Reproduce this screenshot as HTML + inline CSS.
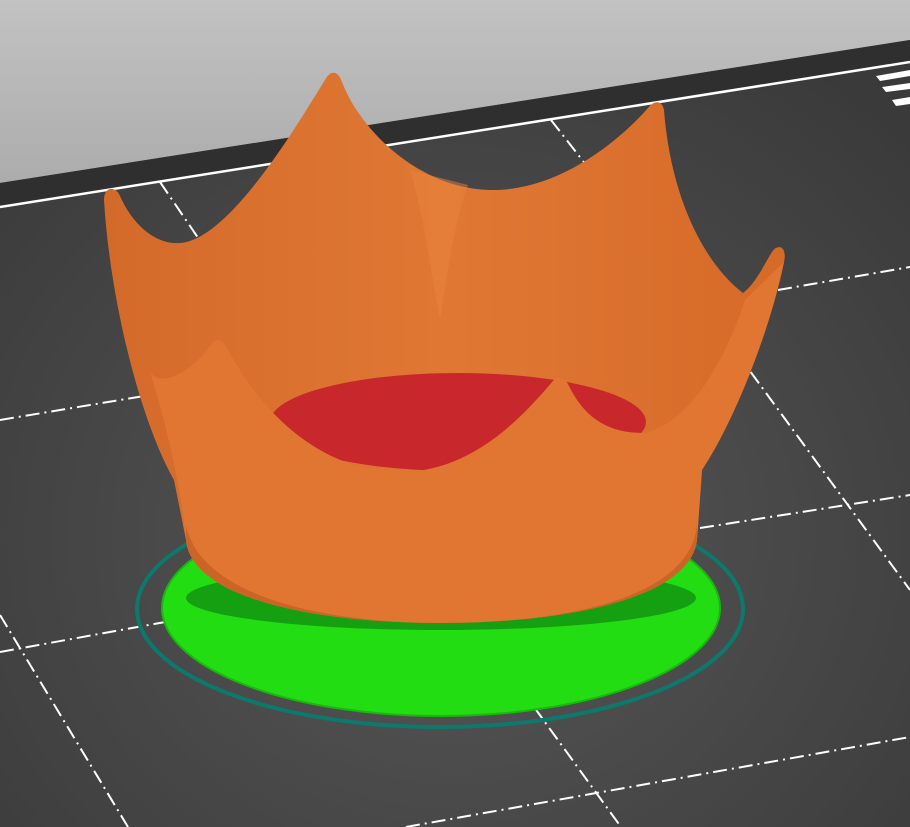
<!DOCTYPE html>
<html><head><style>html,body{margin:0;padding:0;width:910px;height:827px;overflow:hidden;background:#3c3c3c}</style></head>
<body>
<svg width="910" height="827" viewBox="0 0 910 827" xmlns="http://www.w3.org/2000/svg">
<defs>
<radialGradient id="bed" cx="0.5" cy="0.65" r="0.7">
<stop offset="0" stop-color="#575757"/><stop offset="1" stop-color="#3a3a3a"/>
</radialGradient>
<linearGradient id="sky" x1="0" y1="0" x2="0" y2="1">
<stop offset="0" stop-color="#c2c2c2"/><stop offset="1" stop-color="#acacac"/>
</linearGradient>
<linearGradient id="body" x1="0" y1="0" x2="1" y2="0">
<stop offset="0" stop-color="#d46a2a"/><stop offset="0.5" stop-color="#e07834"/><stop offset="1" stop-color="#d66a28"/>
</linearGradient>
</defs>
<rect width="910" height="827" fill="url(#bed)"/>
<polygon points="0,0 910,0 910,40 0,183" fill="url(#sky)"/>
<polygon points="0,183 910,40 910,62 0,207" fill="#2f2f2f"/>
<line x1="0" y1="207" x2="910" y2="62" stroke="#fff" stroke-width="2.5"/>
<g fill="#fff"><polygon points="876,76 910,70 910,76 880,81"/><polygon points="882,87 910,83 910,89 886,92"/><polygon points="892,100 910,97 910,104 896,106"/></g>
<g stroke="#fff" stroke-width="2" stroke-dasharray="14,5,2,5" fill="none">
<line x1="160" y1="182" x2="205" y2="248"/>
<line x1="551" y1="120" x2="590" y2="170"/>
<line x1="720" y1="330" x2="910" y2="590"/>
<line x1="0" y1="420" x2="150" y2="395"/>
<line x1="778" y1="290" x2="910" y2="267"/>
<line x1="0" y1="652" x2="176" y2="620"/>
<line x1="700" y1="528" x2="910" y2="495"/>
<line x1="0" y1="615" x2="128" y2="827"/>
<line x1="534" y1="707" x2="621" y2="827"/>
<line x1="406" y1="827" x2="910" y2="737"/>
</g>
<ellipse cx="440" cy="609" rx="303" ry="118" fill="none" stroke="#0b7a6c" stroke-width="4"/>
<ellipse cx="441" cy="608" rx="279" ry="108" fill="#22dd11" stroke="#18b80e" stroke-width="2"/>
<ellipse cx="441" cy="598" rx="255" ry="32" fill="#15a012"/>
<path d="M104,200 C104,186 116,186 120,196 C135,230 160,245 180,243 C230,240 300,120 325,80 C330,70 338,70 342,82 C360,130 420,190 493,190 C560,190 620,140 648,108 C654,100 662,100 664,110 C670,190 700,260 743,293 C760,280 770,250 776,248 C784,244 786,254 784,262 C770,330 735,420 702,470 L697,540 C690,600 560,623 441,623 C320,623 192,600 186,540 L174,480 C140,420 110,300 104,200 Z" fill="url(#body)"/>
<path d="M410,170 C425,220 432,280 440,320 C448,270 455,220 468,185 Z" fill="#e8843e" opacity="0.45"/>
<ellipse cx="458" cy="422" rx="188" ry="49" fill="#c8282c"/>
<path d="M150,372 C162,390 195,368 210,346 Q218,334 226,346 C270,430 335,472 400,472 C470,472 520,420 552,382 Q560,372 568,384 C585,420 610,433 644,433 C685,425 722,370 745,300 L784,262 C770,330 735,420 702,470 L697,540 C690,600 560,623 441,623 C320,623 192,600 186,540 C180,480 165,420 150,372 Z" fill="#e07632"/>
<path d="M186,525 C200,595 320,623 441,623 C560,623 690,600 697,525 L697,540 C690,600 560,623 441,623 C320,623 192,600 186,540 Z" fill="#cc6428"/>
</svg>
</body></html>
